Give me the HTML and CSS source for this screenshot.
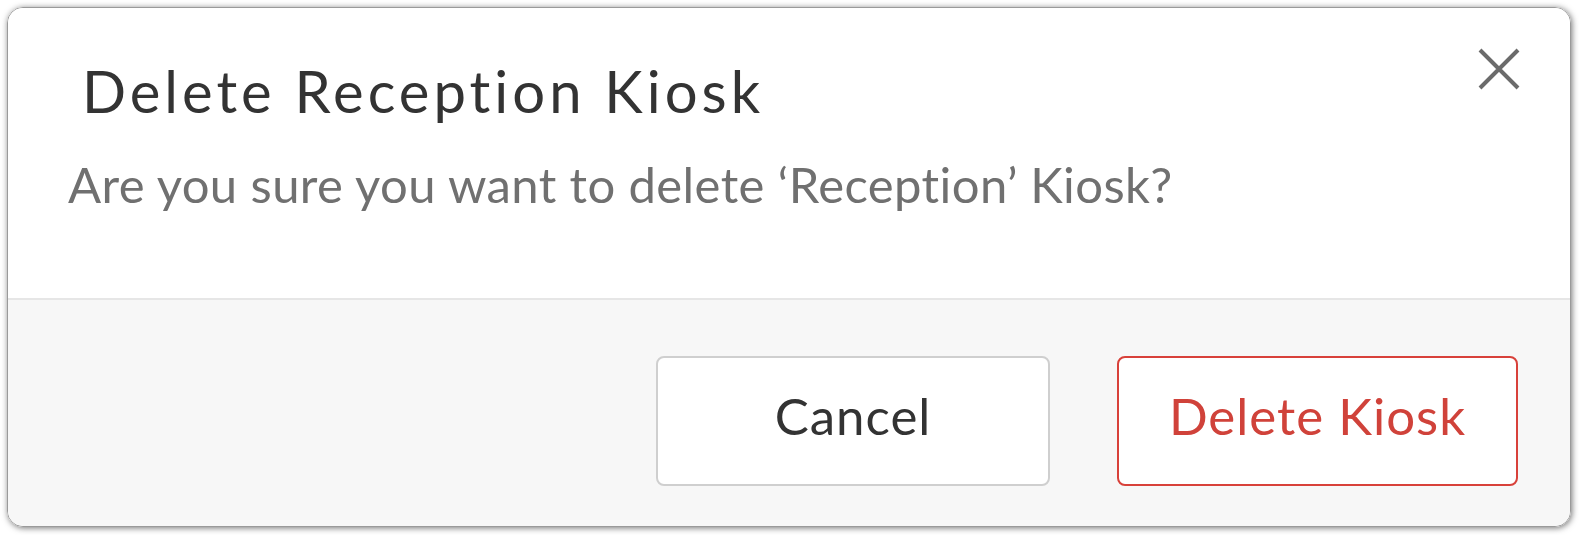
FILE: index.html
```
<!DOCTYPE html>
<html lang="en">
<head>
    <meta charset="UTF-8">
    <meta name="viewport" content="width=device-width, initial-scale=1.0">
    <title>Delete Reception Kiosk</title>
    <link rel="stylesheet" href="styles.css">
</head>
<body>
    <div class="modal">
        <div class="modal-body">
            <div class="modal-header">
                <h2 class="modal-title">Delete Reception Kiosk</h2>
                <button class="modal-close" aria-label="Close">
                    <svg width="42" height="42" viewBox="0 0 42 42">
                        <path d="M2 2 L40 40 M40 2 L2 40" stroke="#6b6b6b" stroke-width="4" fill="none"/>
                    </svg>
                </button>
            </div>
            <p class="modal-text">Are you sure you want to delete ‘Reception’ Kiosk?</p>
        </div>
        <div class="modal-footer">
            <button class="btn btn-cancel">Cancel</button>
            <button class="btn btn-danger">Delete Kiosk</button>
        </div>
    </div>
</body>
</html>
```

FILE: styles.css
```
html, body {
    margin: 0;
    height: 100%;
}
body {
    font-family: Lato, "Open Sans", sans-serif;
    background: #fff;
    padding: 7px 8px 8px 7px;
    box-sizing: border-box;
}
.modal {
    height: 100%;
    display: flex;
    flex-direction: column;
    border: 1px solid #9a9a9a;
    border-radius: 16px;
    box-shadow: 1px 1px 6px rgba(0,0,0,0.55);
    overflow: hidden;
    box-sizing: border-box;
}
.modal-body {
    height: 290px;
    flex-shrink: 0;
    background: #fff;
    border-bottom: 2px solid #e6e6e6;
    padding: 0 60px;
}
.modal-header {
    display: flex;
    justify-content: space-between;
    align-items: flex-start;
}
.modal-title {
    margin: 47px 0 0 14px;
    font-size: 58px;
    font-weight: 400;
    letter-spacing: 4px;
    color: #333;
    line-height: 72px;
}
.modal-close {
    margin: 40px -10px 0 0;
    padding: 0;
    background: none;
    border: none;
    cursor: pointer;
}
.modal-close svg {
    display: block;
}
.modal-text {
    margin: 27px 0 0 0;
    font-size: 49px;
    letter-spacing: 0.4px;
    color: #707070;
    line-height: 60px;
}
.modal-footer {
    flex: 1;
    background: #f7f7f7;
    display: flex;
    justify-content: flex-end;
    align-items: flex-start;
    gap: 67px;
    padding: 56px 52px 0 0;
}
.btn {
    height: 130px;
    padding: 0 0 12px 0;
    border-radius: 8px;
    background: #fff;
    font-family: inherit;
    font-size: 51px;
    letter-spacing: 1px;
    cursor: pointer;
}
.btn-cancel {
    width: 394px;
    border: 2px solid #cfcfcf;
    color: #333;
}
.btn-danger {
    width: 401px;
    border: 2px solid #d8413a;
    color: #d0423a;
}
```
